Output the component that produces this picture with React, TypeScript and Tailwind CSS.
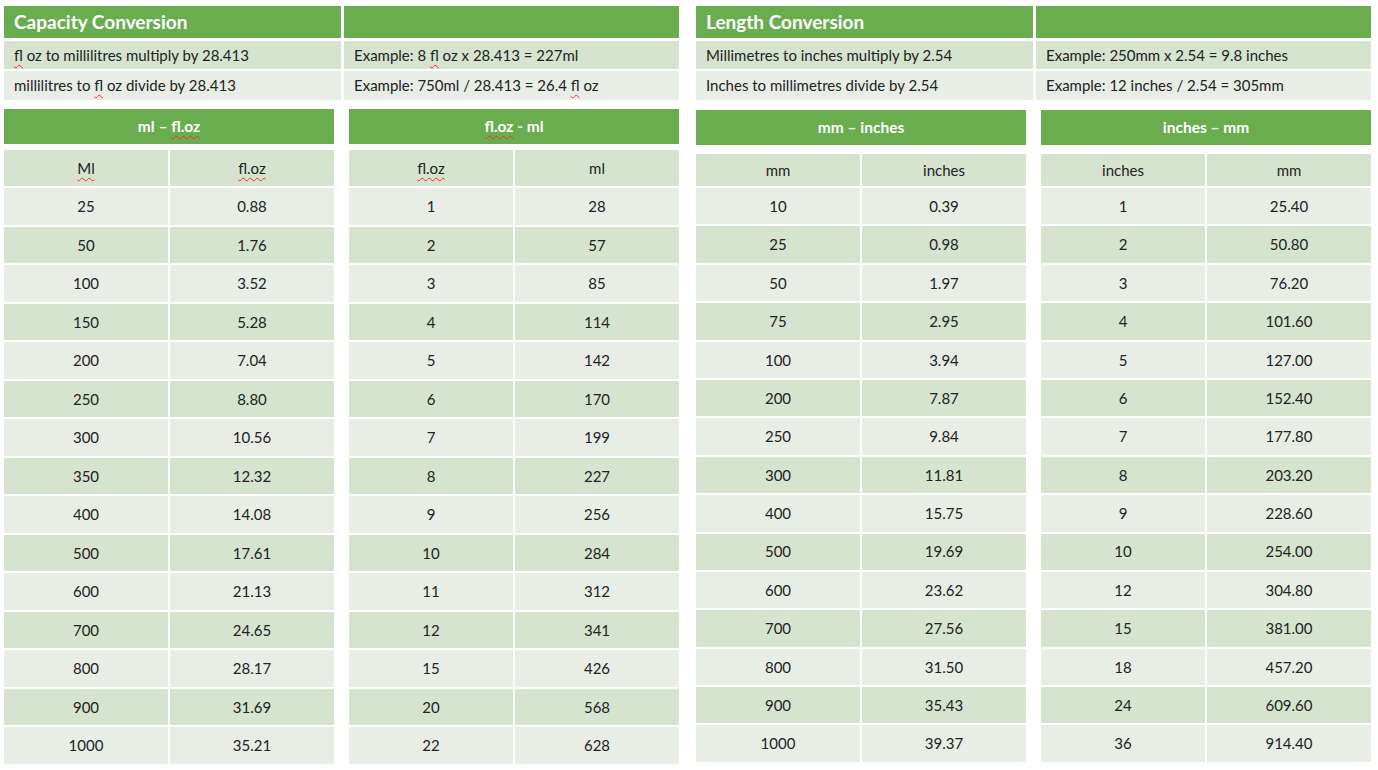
import React from "react";

const W = ({ children }: { children: React.ReactNode }) => (
  <span className="underline decoration-wavy decoration-red-500 decoration-1 underline-offset-[3px]">{children}</span>
);

type Row = [string, string];

const t1: Row[] = [
  ["25", "0.88"], ["50", "1.76"], ["100", "3.52"], ["150", "5.28"], ["200", "7.04"], ["250", "8.80"],
  ["300", "10.56"], ["350", "12.32"], ["400", "14.08"], ["500", "17.61"], ["600", "21.13"], ["700", "24.65"],
  ["800", "28.17"], ["900", "31.69"], ["1000", "35.21"],
];
const t2: Row[] = [
  ["1", "28"], ["2", "57"], ["3", "85"], ["4", "114"], ["5", "142"], ["6", "170"], ["7", "199"], ["8", "227"],
  ["9", "256"], ["10", "284"], ["11", "312"], ["12", "341"], ["15", "426"], ["20", "568"], ["22", "628"],
];
const t3: Row[] = [
  ["10", "0.39"], ["25", "0.98"], ["50", "1.97"], ["75", "2.95"], ["100", "3.94"], ["200", "7.87"], ["250", "9.84"],
  ["300", "11.81"], ["400", "15.75"], ["500", "19.69"], ["600", "23.62"], ["700", "27.56"], ["800", "31.50"],
  ["900", "35.43"], ["1000", "39.37"],
];
const t4: Row[] = [
  ["1", "25.40"], ["2", "50.80"], ["3", "76.20"], ["4", "101.60"], ["5", "127.00"], ["6", "152.40"], ["7", "177.80"],
  ["8", "203.20"], ["9", "228.60"], ["10", "254.00"], ["12", "304.80"], ["15", "381.00"], ["18", "457.20"],
  ["24", "609.60"], ["36", "914.40"],
];

function Table({
  title,
  h1,
  h2,
  rows,
  wide,
}: {
  title: React.ReactNode;
  h1: React.ReactNode;
  h2: React.ReactNode;
  rows: Row[];
  wide?: boolean;
}) {
  return (
    <div className="w-[330px] flex flex-col">
      <div className="h-[35px] bg-[#6aad4f] flex items-center justify-center text-white font-bold text-[15.5px]">
        {title}
      </div>
      <div
        className={
          wide
            ? "mt-[6px] h-[36px] grid grid-cols-2 gap-x-[2px] text-[15px] text-[#222]"
            : "mt-[9px] h-[32px] grid grid-cols-2 gap-x-[2px] text-[15px] text-[#222]"
        }
      >
        <div className="bg-[#d5e3cf] flex items-center justify-center">{h1}</div>
        <div className="bg-[#d5e3cf] flex items-center justify-center">{h2}</div>
      </div>
      <div className="flex flex-col gap-[2px] mt-[2px]">
        {rows.map((r, i) => (
          <div
            key={i}
            className={
              (wide ? "h-[36.5px]" : "h-[36.4px]") + " grid grid-cols-2 gap-x-[2px] text-[15px] text-[#222]"
            }
          >
            <div className={(i % 2 === 0 ? "bg-[#e8eee6]" : "bg-[#d5e3cf]") + " flex items-center justify-center"}>
              {r[0]}
            </div>
            <div className={(i % 2 === 0 ? "bg-[#e8eee6]" : "bg-[#d5e3cf]") + " flex items-center justify-center"}>
              {r[1]}
            </div>
          </div>
        ))}
      </div>
    </div>
  );
}

function TopBlock({
  title,
  a1,
  a2,
  b1,
  b2,
}: {
  title: string;
  a1: React.ReactNode;
  a2: React.ReactNode;
  b1: React.ReactNode;
  b2: React.ReactNode;
}) {
  return (
    <div className="grid grid-cols-[337px_335px] gap-x-[3px] text-[15px] text-[#222]">
      <div className="h-[32px] bg-[#6aad4f] flex items-center pl-[10px] text-white font-bold text-[19px]">{title}</div>
      <div className="h-[32px] bg-[#6aad4f]" />
      <div className="mt-[3px] h-[28px] bg-[#d5e3cf] flex items-center pl-[10px]">{a1}</div>
      <div className="mt-[3px] h-[28px] bg-[#d5e3cf] flex items-center pl-[10px]">{a2}</div>
      <div className="mt-[2px] h-[29px] bg-[#e8eee6] flex items-center pl-[10px]">{b1}</div>
      <div className="mt-[2px] h-[29px] bg-[#e8eee6] flex items-center pl-[10px]">{b2}</div>
    </div>
  );
}

export default function App() {
  return (
    <div
      className="w-[1378px] h-[770px] bg-white flex gap-x-[17px] pl-[4px] pt-[6px] overflow-hidden"
      style={{ fontFamily: "Lato, 'Open Sans', sans-serif" }}
    >
      <div className="w-[675px] flex flex-col">
        <TopBlock
          title="Capacity Conversion"
          a1={<span><W>fl</W> oz to millilitres multiply by 28.413</span>}
          a2={<span>Example: 8 <W>fl</W> oz x 28.413 = 227ml</span>}
          b1={<span>millilitres to <W>fl</W> oz divide by 28.413</span>}
          b2={<span>Example: 750ml / 28.413 = 26.4 <W>fl</W> oz</span>}
        />
        <div className="mt-[9px] flex gap-x-[15px]">
          <Table title={<span>ml – <W>fl.oz</W></span>} h1={<W>Ml</W>} h2={<W>fl.oz</W>} rows={t1} wide />
          <Table title={<span><W>fl.oz</W> - ml</span>} h1={<W>fl.oz</W>} h2="ml" rows={t2} wide />
        </div>
      </div>
      <div className="w-[675px] flex flex-col">
        <TopBlock
          title="Length Conversion"
          a1="Millimetres to inches multiply by 2.54"
          a2="Example: 250mm x 2.54 = 9.8 inches"
          b1="Inches to millimetres divide by 2.54"
          b2="Example: 12 inches / 2.54 = 305mm"
        />
        <div className="mt-[10px] flex gap-x-[15px]">
          <Table title="mm – inches" h1="mm" h2="inches" rows={t3} />
          <Table title="inches – mm" h1="inches" h2="mm" rows={t4} />
        </div>
      </div>
    </div>
  );
}
